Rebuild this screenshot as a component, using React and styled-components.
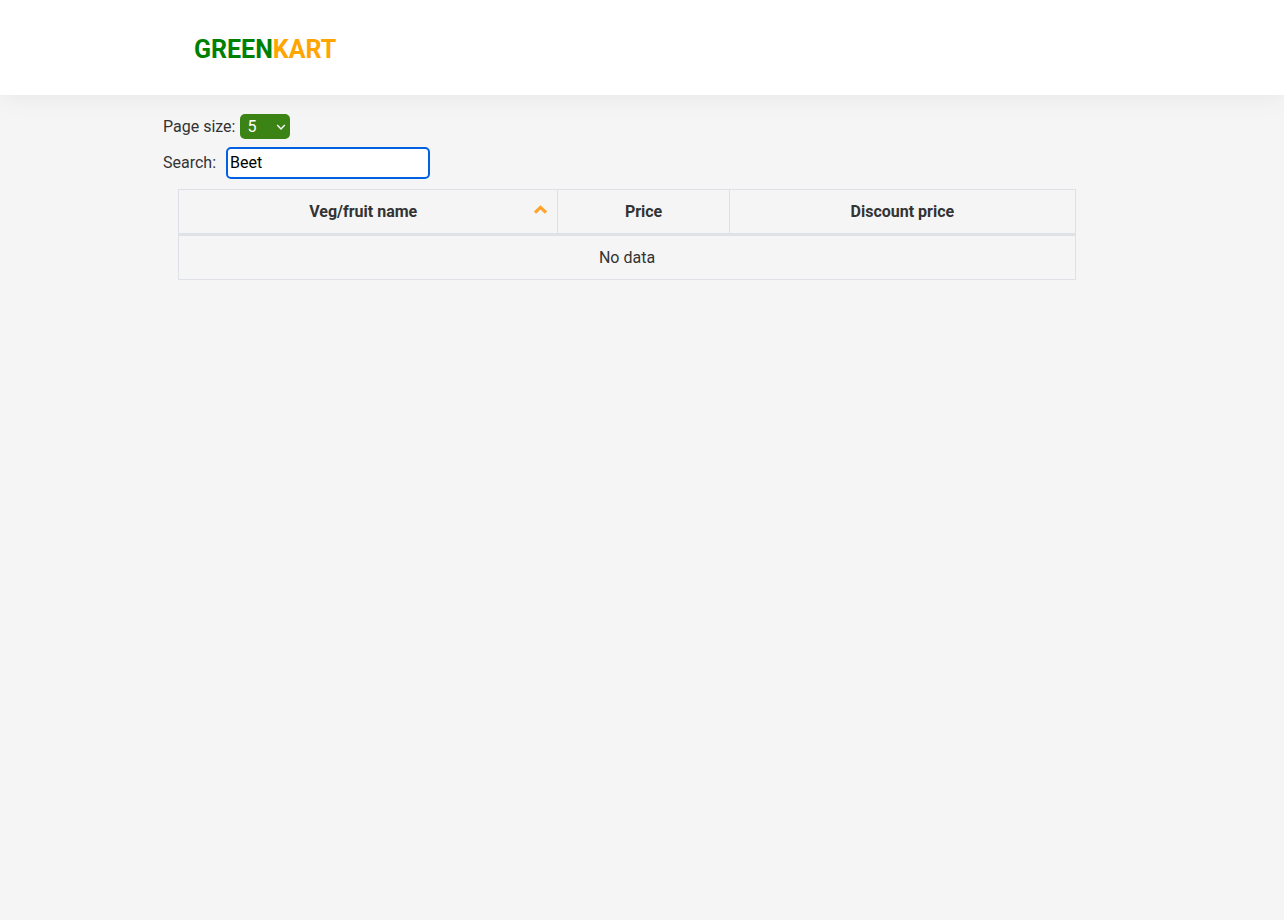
import React, { useState } from "react";
import styled, { createGlobalStyle } from "styled-components";

const GlobalStyle = createGlobalStyle`
  *, *::before, *::after { box-sizing: border-box; }
  body {
    margin: 0;
    background: #f5f5f5;
    color: #333;
    font: 400 16px/24px Roboto, "Liberation Sans", sans-serif;
  }
`;

const Header = styled.header`
  background: #fff;
  padding: 34px 0 29px;
  box-shadow: 0 0 25px rgba(0, 0, 0, 0.07);
`;

const Container = styled.div`
  width: calc(75% - 1px);
  margin: 0 auto;
  padding: 0 2px;
`;

const Brand = styled.div`
  padding-left: 31px;
  color: green;
  font-size: 25px;
  line-height: 32px;
  font-weight: 700;
  span { color: orange; }
`;

const Controls = styled.form`
  display: flex;
  flex-direction: column;
  gap: 8px;
  padding-top: 19px;
`;

const Field = styled.div`
  display: flex;
  align-items: center;
  gap: ${(p) => p.$gap}px;
`;

const SelectWrap = styled.div`
  position: relative;
  display: flex;
  svg {
    position: absolute;
    right: 4px;
    top: 8px;
    pointer-events: none;
  }
`;

const PageSize = styled.select`
  appearance: none;
  width: 50px;
  height: 25px;
  padding: 0 7px;
  border: 0;
  border-radius: 5px;
  background: #3b8314;
  color: #fff;
  font: inherit;
`;

const SearchInput = styled.input`
  width: 204px;
  height: 32px;
  padding: 0 2px 2px;
  border: 2px solid #0062e3;
  border-radius: 5px;
  outline: 0;
  background: #fff;
  color: #000;
  font: inherit;
`;

const TableWrap = styled.div`
  padding: 10px 45px 0 15px;
`;

const Table = styled.table`
  width: 100%;
  table-layout: fixed;
  border-collapse: collapse;
  text-align: center;
`;

const HeadCell = styled.th`
  width: ${(p) => p.$width};
  padding: 10px 10px 9px;
  border: 1px solid #dee2e6;
  border-bottom: 3px solid #dee2e6;
  font-weight: 700;
`;

const HeadContent = styled.div`
  display: flex;
  align-items: center;
  span { flex: 1; padding-left: 4px; }
  svg { display: block; }
`;

const Cell = styled.td`
  padding: 10px 10px 9px;
  border: 1px solid #dee2e6;
`;

const SortIcon = () => (
  <svg width="14" height="14" viewBox="0 0 14 14" fill="none" aria-hidden="true">
    <path d="M2 7.6 7.5 2.4l5.5 5.2" stroke="#ffa32b" strokeWidth="3.2" />
  </svg>
);

const SelectArrow = () => (
  <svg width="10" height="10" viewBox="0 0 10 10" fill="none" aria-hidden="true">
    <path d="M1.2 3 5 7l3.8-4" stroke="#fff" strokeWidth="1.4" />
  </svg>
);

export default function App() {
  const [query, setQuery] = useState("Beet");
  return (
    <>
      <GlobalStyle />
      <Header>
        <Container>
          <Brand>GREEN<span>KART</span></Brand>
        </Container>
      </Header>
      <Container as="main">
        <Controls>
          <Field $gap={5}>
            <label htmlFor="page-size">Page size:</label>
            <SelectWrap>
              <PageSize id="page-size" defaultValue="5">
                <option>5</option>
                <option>10</option>
                <option>20</option>
              </PageSize>
              <SelectArrow />
            </SelectWrap>
          </Field>
          <Field $gap={10}>
            <label htmlFor="search">Search:</label>
            <SearchInput id="search" type="text" value={query} onChange={(e) => setQuery(e.target.value)} />
          </Field>
        </Controls>
        <TableWrap>
          <Table>
            <thead>
              <tr>
                <HeadCell $width="42.3%" aria-sort="ascending">
                  <HeadContent><span>Veg/fruit name</span><SortIcon /></HeadContent>
                </HeadCell>
                <HeadCell $width="19.1%">Price</HeadCell>
                <HeadCell $width="38.6%">Discount price</HeadCell>
              </tr>
            </thead>
            <tbody>
              <tr><Cell colSpan={3}>No data</Cell></tr>
            </tbody>
          </Table>
        </TableWrap>
      </Container>
    </>
  );
}
